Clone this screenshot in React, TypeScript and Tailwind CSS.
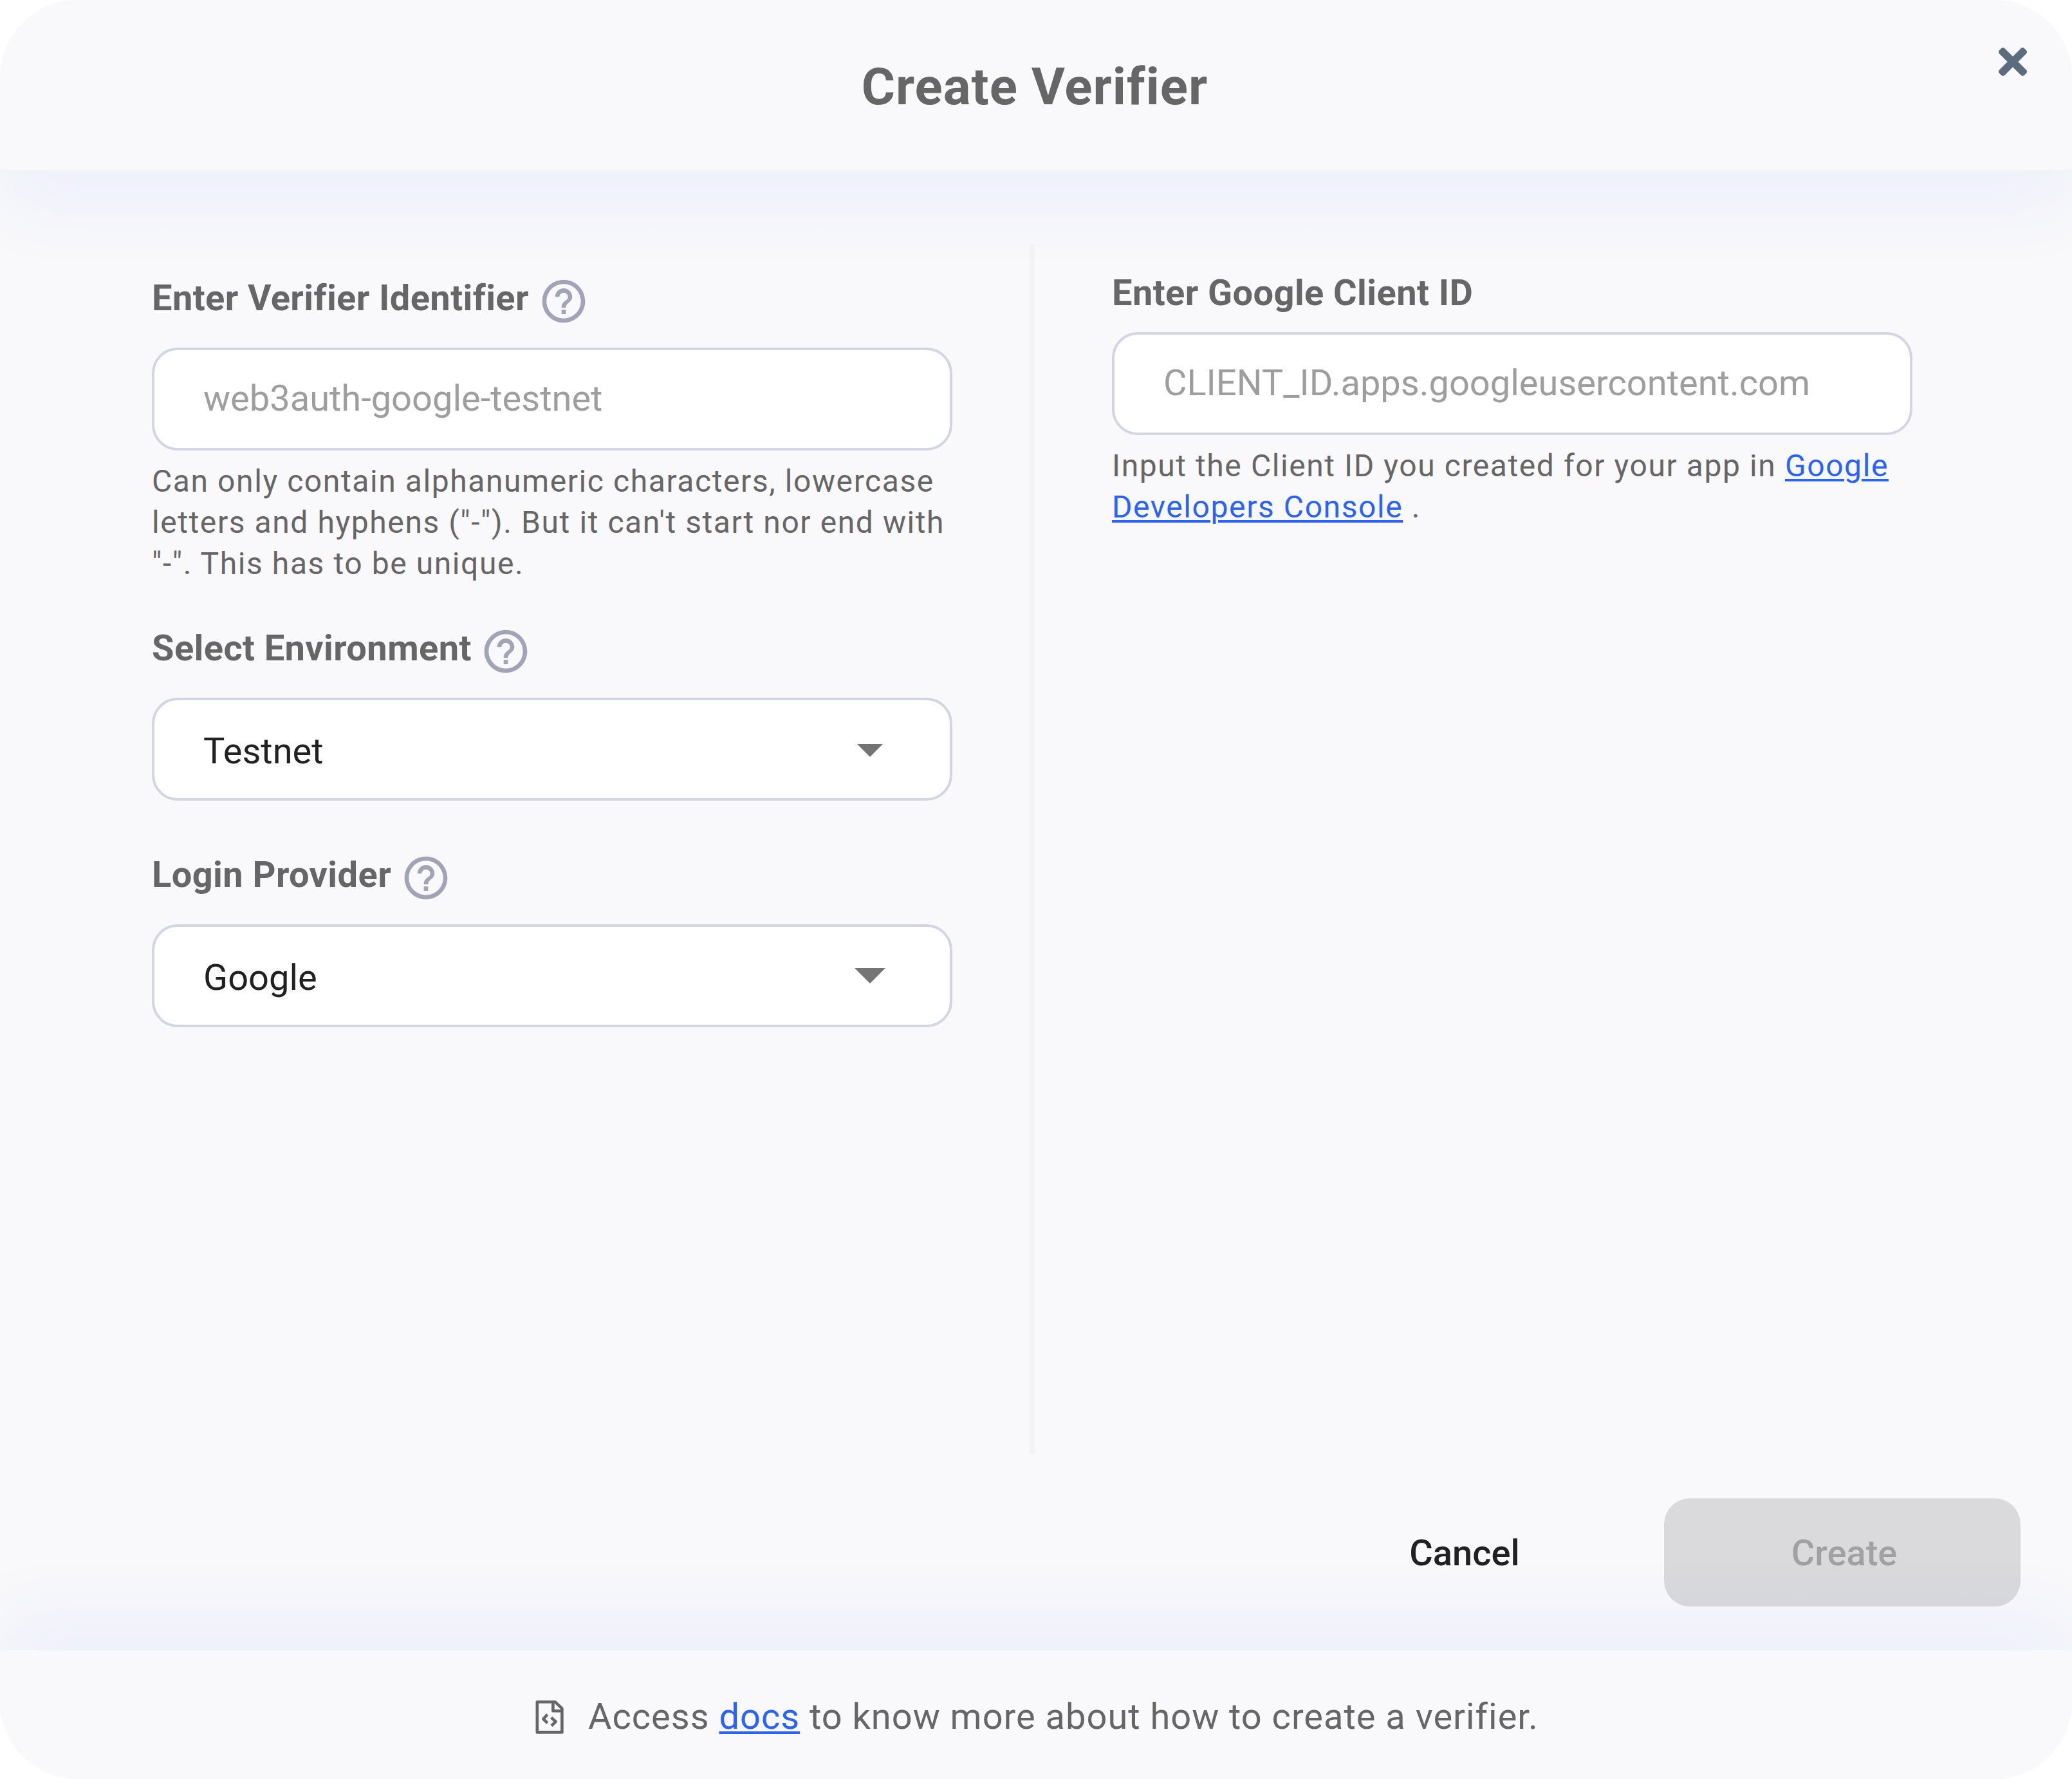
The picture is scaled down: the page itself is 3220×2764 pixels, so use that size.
import type { ReactNode } from 'react';
import { FaTimes } from 'react-icons/fa';
import { MdArrowDropDown, MdHelpOutline } from 'react-icons/md';

function Label({ children }: { children: ReactNode }) {
  return (
    <div className="flex h-20 items-start gap-[13.6px]">
      <span className="pt-[3px] text-[56px] leading-[64px] font-bold tracking-[0.4px] whitespace-nowrap">{children}</span>
      <MdHelpOutline className="size-20 shrink-0 text-[#a2a3b7]" />
    </div>
  );
}

function TextField({ placeholder }: { placeholder: string }) {
  return (
    <div className="flex h-40 w-full items-center rounded-[40px] border-4 border-[#d3d5e2] bg-white px-[76px] pb-0.5">
      <input
        type="text"
        placeholder={placeholder}
        className="h-[66px] w-full bg-transparent text-[56px] leading-[66px] outline-none placeholder:text-[#9e9e9e]"
      />
    </div>
  );
}

function SelectField({ value, children }: { value: string; children: ReactNode }) {
  return (
    <button
      type="button"
      className="flex h-40 w-full items-center justify-between rounded-[40px] border-4 border-[#d3d5e2] bg-white pl-[76px] text-left"
    >
      <span className="pt-1.5 text-[56px] leading-[66px] text-[#212121]">{value}</span>
      <span className="mr-[76px] flex w-24 items-center justify-center text-[#757575]">{children}</span>
    </button>
  );
}

function FileCodeIcon() {
  return (
    <svg
      viewBox="0 0 44 54"
      className="mt-2 h-[54px] w-11 shrink-0"
      fill="none"
      stroke="currentColor"
      strokeWidth="4.6"
      strokeLinejoin="round"
    >
      <path d="M2.8 3.2H30.6L41.4 13.4V50.4H2.8Z" />
      <path d="M27.4 3.2V17.2H41.4" />
      <path d="M18.6 22.8L12.4 29.8L18.8 36.2M24.6 27.6L31.6 33.8L25 40.4" />
    </svg>
  );
}

const linkClass = 'text-[#2962ff] underline decoration-4 underline-offset-4';

export default function App() {
  return (
    <div className="h-[2764px] w-[3220px] bg-white font-['Roboto',sans-serif] text-[#666666]">
      <div className="flex h-full w-full flex-col overflow-hidden rounded-[120px] bg-[#f9f9fb]">
        <header className="relative flex h-[268px] w-full shrink-0 justify-center border-b-4 border-[#f3f3f4] bg-[#f9f9fb] pt-[87px] pr-1 shadow-[0_56px_112px_rgba(46,91,255,0.06)]">
          <h1 className="text-[80px] leading-[96px] font-bold tracking-[1px]">Create Verifier</h1>
          <button type="button" aria-label="Close" className="absolute top-16 right-[70px] text-[#5c6c7f]">
            <FaTimes className="h-16 w-11" />
          </button>
        </header>

        <main className="flex h-[1992px] shrink-0">
          <section className="ml-[236px] w-[1244px] pt-40">
            <Label>Enter Verifier Identifier</Label>
            <div className="mt-8">
              <TextField placeholder="web3auth-google-testnet" />
            </div>
            <p className="mt-4 text-[48px] leading-[64px] tracking-[1.58px]">
              Can only contain alphanumeric characters, lowercase letters and hyphens ("-"). But it can't start nor end with
              "-". This has to be unique.
            </p>
            <div className="mt-16">
              <Label>Select Environment</Label>
            </div>
            <div className="mt-8">
              <SelectField value="Testnet">
                <MdArrowDropDown className="size-24" />
              </SelectField>
            </div>
            <div className="mt-20">
              <Label>Login Provider</Label>
            </div>
            <div className="mt-8">
              <SelectField value="Google">
                <span className="h-0 w-0 border-x-[24px] border-t-[24px] border-x-transparent border-t-[#757575]" />
              </SelectField>
            </div>
          </section>

          <div className="mt-28 ml-[120px] w-2 bg-[#f3f3f4]" />

          <section className="ml-[120px] w-[1244px] pt-[155px]">
            <h2 className="text-[56px] leading-[64px] font-bold tracking-[0.4px]">Enter Google Client ID</h2>
            <div className="mt-[29px]">
              <TextField placeholder="CLIENT_ID.apps.googleusercontent.com" />
            </div>
            <p className="mt-4 text-[48px] leading-[64px] tracking-[1.58px]">
              Input the Client ID you created for your app in{' '}
              <a href="#console" className={linkClass}>
                Google Developers Console
              </a>{' '}
              .
            </p>
          </section>
        </main>

        <div className="flex h-[304px] shrink-0 items-start justify-end pt-[68px] pr-20 text-[56px] leading-[66px] font-medium">
          <button type="button" className="mr-[54px] h-[168px] w-[512px] pt-0.5 text-center text-[#212121]">
            Cancel
          </button>
          <button
            type="button"
            disabled
            className="h-[168px] w-[554px] rounded-[40px] bg-black/12 pt-0.5 pl-1.5 text-center text-black/26"
          >
            Create
          </button>
        </div>

        <footer className="flex h-[200px] shrink-0 items-center bg-[#f9f9fb] pl-[832px] shadow-[0_-56px_112px_rgba(46,91,255,0.06)]">
          <FileCodeIcon />
          <p className="ml-[38px] pt-1.5 text-[56px] leading-[64px] tracking-[0.98px]">
            Access{' '}
            <a href="#docs" className={linkClass}>
              docs
            </a>{' '}
            to know more about how to create a verifier.
          </p>
        </footer>
      </div>
    </div>
  );
}
